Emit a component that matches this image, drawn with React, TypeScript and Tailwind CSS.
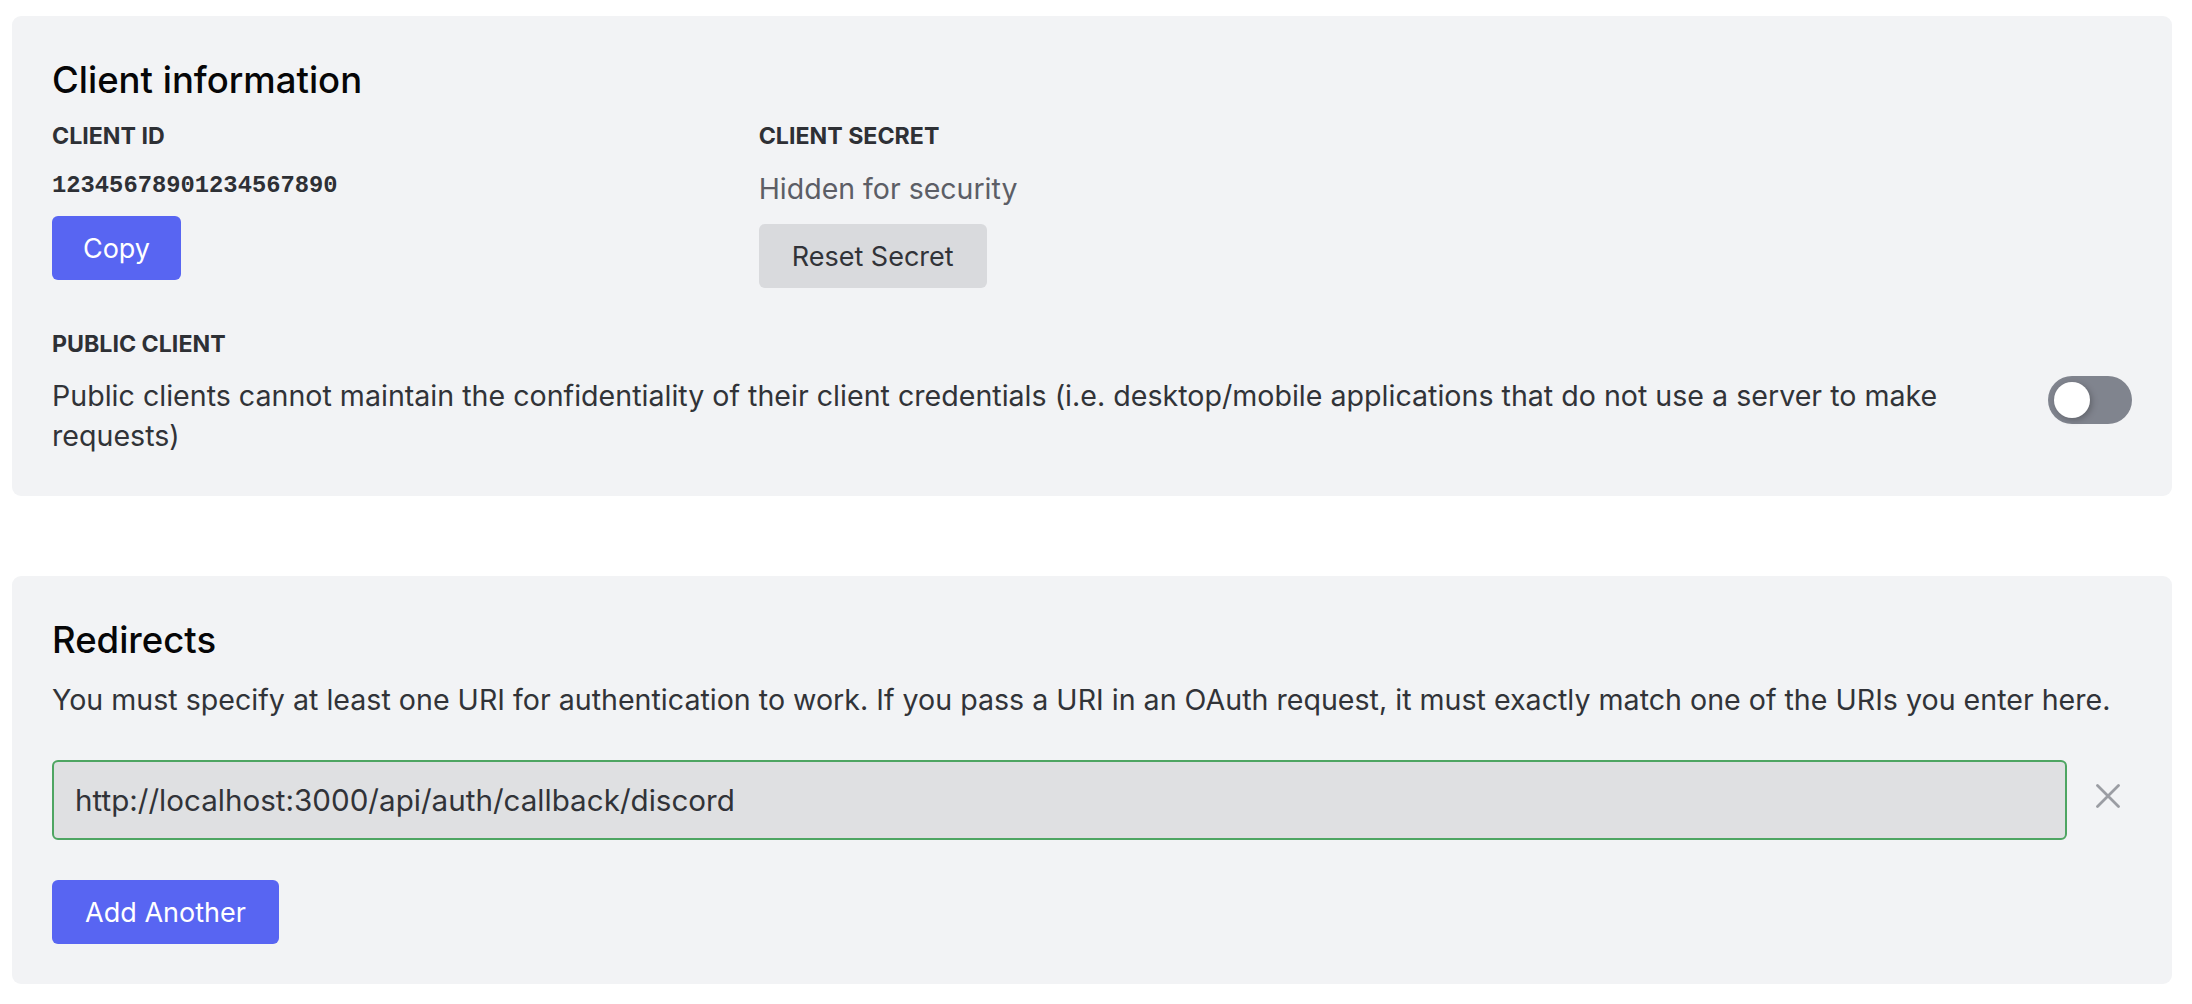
import { useState } from "react"

const sans = "font-['Inter',sans-serif]"

function Label({ children }: { children: React.ReactNode }) {
  return <div className="h-[32px] leading-[32px] text-[23.2px] font-bold text-[#2e3035]">{children}</div>
}

function Toggle({ on, onChange }: { on: boolean; onChange: (v: boolean) => void }) {
  return (
    <button
      onClick={() => onChange(!on)}
      className={`relative shrink-0 w-[84px] h-[48px] rounded-full transition-colors ${on ? "bg-[#23a55a]" : "bg-[#80848e]"}`}
    >
      <span
        className={`absolute top-[6px] w-[36px] h-[36px] rounded-full bg-white shadow-[2px_2px_6px_rgba(0,0,0,0.25)] transition-all ${on ? "left-[42px]" : "left-[6px]"}`}
      />
    </button>
  )
}

export default function App() {
  const [isPublic, setIsPublic] = useState(false)
  const [redirects, setRedirects] = useState<string[]>(["http://localhost:3000/api/auth/callback/discord"])

  return (
    <div className={`${sans} bg-white min-h-[1004px] pt-[16px] pl-[12px]`}>
      {/* client info */}
      <section className="w-[2160px] bg-[#f2f3f5] rounded-[9px] px-[40px] pt-[40px] pb-[40px]">
        <h2 className="h-[48px] leading-[48px] text-[36.5px] font-medium text-[#060607]">Client information</h2>
        <div className="mt-[16px] grid grid-cols-3 gap-x-[40px]">
          <div>
            <Label>CLIENT ID</Label>
            <div className="mt-[18px] h-[32px] leading-[32px] font-['Liberation_Mono',monospace] font-bold text-[23.8px] text-[#2e3035]">
              12345678901234567890
            </div>
            <button className="mt-[14px] w-[129px] h-[64px] pt-[2px] rounded-[6px] bg-[#5865f2] text-white text-[27px]">
              Copy
            </button>
          </div>
          <div>
            <Label>CLIENT SECRET</Label>
            <div className="mt-[17px] h-[40px] leading-[40px] text-[28.5px] text-[#5c5e66]">Hidden for security</div>
            <button className="mt-[15px] w-[228px] h-[64px] pt-[2px] rounded-[6px] bg-[#d9dadd] text-[#313338] text-[27px]">
              Reset Secret
            </button>
          </div>
        </div>
        <div className="mt-[40px]">
          <Label>PUBLIC CLIENT</Label>
          <div className="mt-[16px] flex items-start gap-[40px]">
            <p className="flex-1 leading-[40px] text-[28.6px] text-[#313338]">
              Public clients cannot maintain the confidentiality of their client credentials (i.e. desktop/mobile
              applications that do not use a server to make requests)
            </p>
            <Toggle on={isPublic} onChange={setIsPublic} />
          </div>
        </div>
      </section>

      {/* redirects */}
      <section className="mt-[80px] w-[2160px] bg-[#f2f3f5] rounded-[9px] px-[40px] pt-[40px] pb-[40px]">
        <h2 className="h-[48px] leading-[48px] text-[36.5px] font-medium text-[#060607]">Redirects</h2>
        <p className="mt-[16px] h-[40px] leading-[40px] text-[28.6px] text-[#313338] whitespace-nowrap">
          You must specify at least one URI for authentication to work. If you pass a URI in an OAuth request, it must
          exactly match one of the URIs you enter here.
        </p>
        <div className="mt-[40px] flex flex-col gap-[16px]">
          {redirects.map((r, i) => (
            <div key={i} className="flex items-center">
              <input
                value={r}
                onChange={(e) => setRedirects(redirects.map((x, j) => (j === i ? e.target.value : x)))}
                className="flex-1 h-[80px] rounded-[6px] border-2 border-[#4ea562] bg-[#dfe0e2] pl-[21px] pr-[20px] text-[29.6px] leading-[40px] text-[#313338] outline-none"
              />
              <div className="w-[65px] h-[80px] flex items-center pl-[29px] pb-[8px]">
                <button onClick={() => setRedirects(redirects.filter((_, j) => j !== i))}>
                  <svg width="24" height="24" viewBox="0 0 24 24" className="block">
                    <path d="M1.5 1.5L22.5 22.5M22.5 1.5L1.5 22.5" stroke="#9b9da3" strokeWidth="2.8" strokeLinecap="round" />
                  </svg>
                </button>
              </div>
            </div>
          ))}
        </div>
        <button
          onClick={() => setRedirects([...redirects, ""])}
          className="mt-[40px] w-[227px] h-[64px] pt-[2px] rounded-[6px] bg-[#5865f2] text-white text-[27px]"
        >
          Add Another
        </button>
      </section>
    </div>
  )
}
